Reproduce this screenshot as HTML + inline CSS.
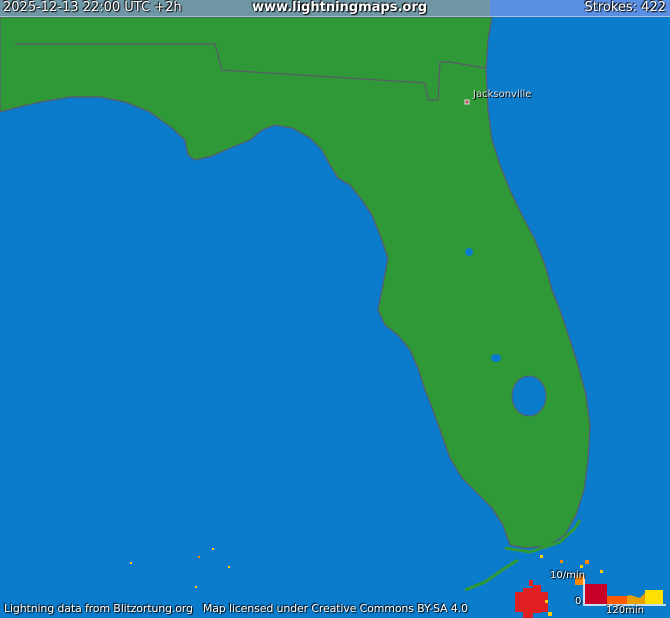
<!DOCTYPE html>
<html><head><style>
body{margin:0;width:670px;height:618px;overflow:hidden;background:#0b7ccb;font-family:"DejaVu Sans","Liberation Sans",sans-serif}
.t{position:absolute;color:#fff;font-size:13px;text-shadow:1px 1px 1px #000,-1px -1px 1px #000;white-space:nowrap}
</style></head><body>
<svg width="670" height="618" style="position:absolute;left:0;top:0">
<rect width="670" height="618" fill="#0b7ccb"/>
<path d="M0,17 L492,17 L488,40 L486,70 L488,110 L492,140 L500,165 L510,190 L522,215 L535,240 L545,265 L552,290 L560,310 L570,340 L578,365 L586,395 L590,425 L588,460 L584,490 L576,515 L565,535 L548,546 L525,548 L510,545 L503,525 L492,508 L478,494 L462,478 L450,458 L440,430 L433,410 L425,390 L418,368 L410,350 L398,335 L385,325 L378,310 L383,285 L388,258 L380,235 L372,215 L362,200 L350,185 L338,178 L330,165 L322,150 L310,138 L292,128 L275,125 L262,130 L250,140 L230,148 L212,156 L195,160 L188,155 L185,140 L172,128 L150,112 L125,102 L100,97 L70,97 L40,102 L15,108 L0,112 Z" fill="#309937" stroke="#5a5a6a" stroke-width="1.2"/>
<path d="M15,44 L215,44 L222,70 L425,83 L428,100 L438,100 L440,62 L450,62 L485,68" fill="none" stroke="#5a5a6a" stroke-width="1.2"/>
<ellipse cx="529" cy="396" rx="17" ry="20" fill="#0b7ccb" stroke="#5a5a6a"/>
<ellipse cx="496" cy="358" rx="5" ry="4" fill="#0b7ccb"/>
<ellipse cx="469" cy="252" rx="4" ry="4" fill="#0b7ccb"/>
<path d="M505,548 L530,552 L560,542 L575,528 L580,520" fill="none" stroke="#309937" stroke-width="3"/>
<path d="M465,590 L485,582 L495,575 L505,568 L518,560" fill="none" stroke="#309937" stroke-width="3"/>
<rect x="465" y="100" width="4" height="4" fill="#c05050" stroke="#ddd"/>
<g fill="#e02020">
<rect x="515" y="592" width="8" height="20"/><rect x="523" y="588" width="10" height="30"/><rect x="533" y="585" width="8" height="28"/><rect x="541" y="592" width="7" height="20"/><rect x="529" y="580" width="4" height="6"/>
</g>
<g fill="#ffcc00">
<rect x="540" y="555" width="3" height="3"/><rect x="545" y="600" width="3" height="3"/><rect x="580" y="565" width="3" height="3"/><rect x="600" y="570" width="3" height="3"/><rect x="548" y="612" width="4" height="4"/><rect x="130" y="562" width="2" height="2"/><rect x="212" y="548" width="2" height="2"/><rect x="228" y="566" width="2" height="2"/><rect x="195" y="586" width="2" height="2"/>
</g>
<g fill="#ff8800"><rect x="575" y="575" width="10" height="10"/><rect x="585" y="560" width="4" height="4"/><rect x="560" y="560" width="3" height="3"/><rect x="198" y="556" width="2" height="2"/></g>
<rect x="0" y="0" width="490" height="17" fill="#6e96a4"/>
<rect x="490" y="0" width="180" height="17" fill="#5a8fe2"/>
<line x1="0" y1="16.5" x2="670" y2="16.5" stroke="#a8c4d4"/>
<g>
<path d="M585,604 L585,588 L590,585 L595,588 L600,596 L610,598 L620,598 L630,595 L640,598 L648,590 L652,596 L658,590 L663,592 L663,604 Z" fill="#e8a000"/>
<rect x="585" y="584" width="22" height="20" fill="#c80028"/>
<rect x="607" y="596" width="20" height="8" fill="#ff5a00"/>
<rect x="645" y="590" width="18" height="14" fill="#ffe000"/>
<path d="M584,577 L584,605 L666,605" fill="none" stroke="#fff" stroke-width="1.5"/>
</g>
</svg>
<div class="t" style="left:3px;top:0;font-size:13px">2025-12-13 22:00 UTC +2h</div>
<div class="t" style="left:252px;top:0;font-size:13px;font-weight:bold">www.lightningmaps.org</div>
<div class="t" style="right:4px;top:0;font-size:13px">Strokes: 422</div>
<div class="t" style="left:473px;top:89px;font-size:10px;color:#ddd;text-shadow:1px 1px 0 #000">Jacksonville</div>
<div class="t" style="left:4px;top:602px;font-size:11px;letter-spacing:-0.15px">Lightning data from Blitzortung.org &nbsp;&nbsp;Map licensed under Creative Commons BY-SA 4.0</div>
<div class="t" style="left:550px;top:570px;font-size:10px">10/min</div>
<div class="t" style="left:575px;top:596px;font-size:10px">0</div>
<div class="t" style="left:606px;top:605px;font-size:10px">120min</div>
</body></html>
